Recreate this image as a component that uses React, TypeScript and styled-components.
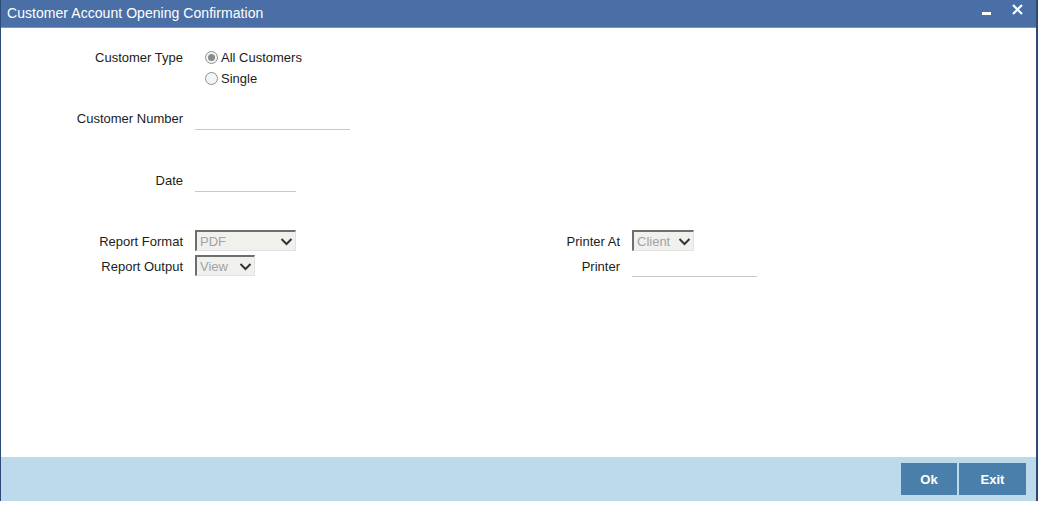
import React from "react";
import styled, { createGlobalStyle } from "styled-components";

const Global = createGlobalStyle`
  html, body { margin: 0; padding: 0; background: #ffffff; }
  body { font-family: "Liberation Sans", Arial, sans-serif; }
  * { box-sizing: border-box; }
`;

const Window = styled.div`
  width: 1038px;
  height: 501px;
  display: flex;
  flex-direction: column;
  border-left: 1px solid #2c4a78;
  border-right: 2px solid #2c4a78;
  background: #ffffff;
`;

const TitleBar = styled.div`
  height: 28px;
  flex: 0 0 28px;
  background: #4a6fa6;
  border-bottom: 1px solid #8497ad;
  display: flex;
  align-items: center;
  padding: 0 0 1px 6px;
  color: #ffffff;
`;

const Title = styled.div`
  flex: 1;
  font-size: 14px;
  letter-spacing: 0.05px;
`;

const WinButtons = styled.div`
  display: flex;
  align-items: flex-start;
  gap: 21px;
  padding: 4px 13px 0 0;
  height: 100%;
`;

const Body = styled.div`
  flex: 1;
  padding-top: 19px;
  display: flex;
  flex-direction: column;
  font-size: 13px;
  color: #1c1c1c;
`;

const Row = styled.div<{ $h?: number; $mt?: number }>`
  display: flex;
  align-items: center;
  height: ${(p) => p.$h ?? 21}px;
  margin-top: ${(p) => p.$mt ?? 0}px;
`;

const TopRow = styled.div<{ $mt?: number }>`
  display: flex;
  align-items: flex-start;
  margin-top: ${(p) => p.$mt ?? 0}px;
`;

const Label = styled.div<{ $w?: number; $pt?: number }>`
  width: ${(p) => p.$w ?? 182}px;
  flex: 0 0 ${(p) => p.$w ?? 182}px;
  text-align: right;
  margin-right: 12px;
  line-height: 21px;
  padding-top: ${(p) => p.$pt ?? 0}px;
  white-space: nowrap;
`;

const RadioGroup = styled.div`
  display: flex;
  flex-direction: column;
  padding-left: 10px;
`;

const RadioItem = styled.label`
  display: flex;
  align-items: center;
  height: 21px;
  gap: 3px;
`;

const RadioCircle = styled.span<{ $checked?: boolean }>`
  width: 13px;
  height: 13px;
  border-radius: 50%;
  border: 1px solid #8f8f8f;
  background: #f4f4f4;
  display: inline-flex;
  align-items: center;
  justify-content: center;
  &::after {
    content: "";
    width: 7px;
    height: 7px;
    border-radius: 50%;
    background: ${(p) => (p.$checked ? "#8a8a8a" : "transparent")};
  }
`;

const LineInput = styled.div<{ $w: number }>`
  width: ${(p) => p.$w}px;
  height: 22px;
  border-bottom: 1px solid #c9c9c9;
`;

const Select = styled.div<{ $w: number }>`
  width: ${(p) => p.$w}px;
  height: 21px;
  background: #f0f0ec;
  border-top: 2px solid #6e6e6e;
  border-left: 2px solid #6e6e6e;
  border-right: 1px solid #e2e2e2;
  border-bottom: 1px solid #e2e2e2;
  display: flex;
  align-items: center;
  justify-content: space-between;
  padding: 0 2px 0 3px;
  color: #a3a3a3;
  font-size: 13px;
`;

const Columns = styled.div`
  display: flex;
  margin-top: 39px;
`;

const Column = styled.div<{ $w?: number }>`
  display: flex;
  flex-direction: column;
  gap: 4px;
  width: ${(p) => (p.$w ? `${p.$w}px` : "auto")};
`;

const Footer = styled.div`
  height: 44px;
  flex: 0 0 44px;
  background: #bdd9ec;
  display: flex;
  justify-content: flex-end;
  align-items: center;
  padding-right: 10px;
  gap: 2px;
`;

const Button = styled.button<{ $w: number }>`
  width: ${(p) => p.$w}px;
  height: 32px;
  background: #4a7fac;
  border: none;
  color: #ffffff;
  font-family: "Liberation Sans", Arial, sans-serif;
  font-weight: bold;
  font-size: 13px;
  padding: 0;
`;

const Chevron = () => (
  <svg width="13" height="9" viewBox="0 0 13 9">
    <path d="M1.5 2 L6.5 7 L11.5 2" fill="none" stroke="#333" strokeWidth="2" />
  </svg>
);

export default function App() {
  return (
    <>
      <Global />
      <Window>
        <TitleBar>
          <Title>Customer Account Opening Confirmation</Title>
          <WinButtons>
            <svg width="9" height="11" viewBox="0 0 9 11">
              <rect x="0" y="8" width="9" height="3" fill="#fff" />
            </svg>
            <svg width="11" height="11" viewBox="0 0 11 11">
              <path d="M1 1 L10 10 M10 1 L1 10" stroke="#fff" strokeWidth="2.2" />
            </svg>
          </WinButtons>
        </TitleBar>
        <Body>
          <TopRow>
            <Label>Customer Type</Label>
            <RadioGroup>
              <RadioItem>
                <RadioCircle $checked />
                All Customers
              </RadioItem>
              <RadioItem>
                <RadioCircle />
                Single
              </RadioItem>
            </RadioGroup>
          </TopRow>
          <Row $mt={19}>
            <Label>Customer Number</Label>
            <LineInput $w={155} />
          </Row>
          <Row $mt={41}>
            <Label>Date</Label>
            <LineInput $w={101} />
          </Row>
          <Columns>
            <Column $w={437}>
              <Row>
                <Label $pt={2}>Report Format</Label>
                <Select $w={101}>
                  PDF
                  <Chevron />
                </Select>
              </Row>
              <Row>
                <Label $pt={2}>Report Output</Label>
                <Select $w={60}>
                  View
                  <Chevron />
                </Select>
              </Row>
            </Column>
            <Column>
              <Row>
                <Label $w={182} $pt={2}>Printer At</Label>
                <Select $w={62}>
                  Client
                  <Chevron />
                </Select>
              </Row>
              <Row>
                <Label $w={182} $pt={2}>Printer</Label>
                <LineInput $w={125} />
              </Row>
            </Column>
          </Columns>
        </Body>
        <Footer>
          <Button $w={56}>Ok</Button>
          <Button $w={67}>Exit</Button>
        </Footer>
      </Window>
    </>
  );
}
